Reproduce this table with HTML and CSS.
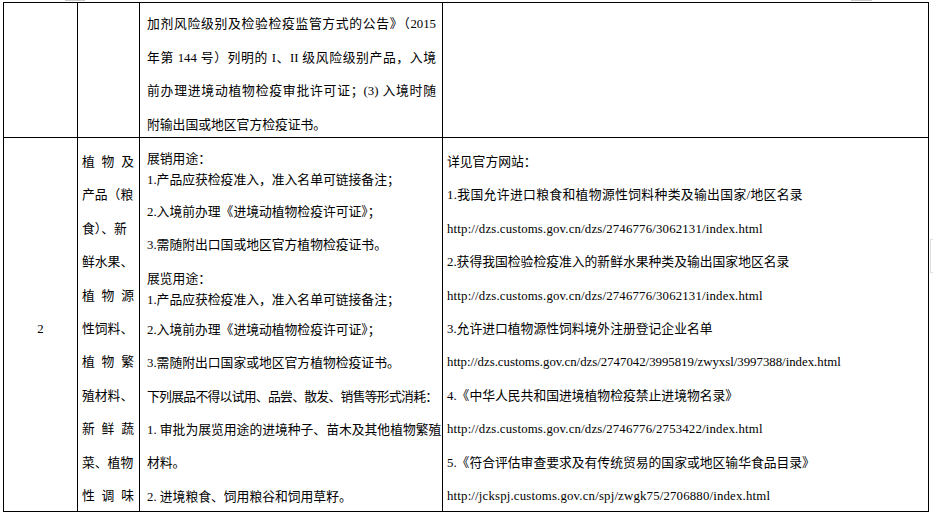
FILE: index.html
```html
<!DOCTYPE html>
<html lang="zh-CN">
<head>
<meta charset="utf-8">
<title>进境展品检疫要求</title>
<link rel="stylesheet" href="styles.css">
</head>
<body>
<div class="sheet">
  <div class="grid">
    <div class="cell"></div>
    <div class="cell"></div>
    <div class="cell c3 r1">
      <div class="jl">加剂风险级别及检验检疫监管方式的公告》（2015</div>
      <div class="jl">年第 144 号）列明的 I、II 级风险级别产品，入境</div>
      <div class="jl">前办理进境动植物检疫审批许可证；(3) 入境时随</div>
      <div>附输出国或地区官方检疫证书。</div>
    </div>
    <div class="cell"></div>

    <div class="cell c1"><div>2</div></div>
    <div class="cell c2">
      <div class="jl">植物及</div>
      <div>产品（粮</div>
      <div>食）、新</div>
      <div>鲜水果、</div>
      <div class="jl">植物源</div>
      <div>性饲料、</div>
      <div class="jl">植物繁</div>
      <div>殖材料、</div>
      <div class="jl">新鲜蔬</div>
      <div>菜、植物</div>
      <div class="jl">性调味</div>
    </div>
    <div class="cell c3 r2">
      <div class="ln">展销用途：</div>
      <div class="ln">1.产品应获检疫准入，准入名单可链接备注；</div>
      <div class="ln g11">2.入境前办理《进境动植物检疫许可证》；</div>
      <div class="ln g12">3.需随附出口国或地区官方植物检疫证书。</div>
      <div class="ln g13">展览用途：</div>
      <div class="ln">1.产品应获检疫准入，准入名单可链接备注；</div>
      <div class="ln g9">2.入境前办理《进境动植物检疫许可证》；</div>
      <div class="ln g12">3.需随附出口国家或地区官方植物检疫证书。</div>
      <div class="ln g12 squeeze">下列展品不得以试用、品尝、散发、销售等形式消耗：</div>
      <div class="ln g12 jl">1. 审批为展览用途的进境种子、苗木及其他植物繁殖</div>
      <div class="ln g12">材料。</div>
      <div class="ln g12">2. 进境粮食、饲用粮谷和饲用草籽。</div>
    </div>
    <div class="cell c4">
      <div>详见官方网站：</div>
      <div class="wide">1.我国允许进口粮食和植物源性饲料种类及输出国家/地区名录</div>
      <div class="url">http://dzs.customs.gov.cn/dzs/2746776/3062131/index.html</div>
      <div>2.获得我国检验检疫准入的新鲜水果种类及输出国家地区名录</div>
      <div class="url">http://dzs.customs.gov.cn/dzs/2746776/3062131/index.html</div>
      <div>3.允许进口植物源性饲料境外注册登记企业名单</div>
      <div>http://dzs.customs.gov.cn/dzs/2747042/3995819/zwyxsl/3997388/index.html</div>
      <div>4.《中华人民共和国进境植物检疫禁止进境物名录》</div>
      <div class="url">http://dzs.customs.gov.cn/dzs/2746776/2753422/index.html</div>
      <div>5.《符合评估审查要求及有传统贸易的国家或地区输华食品目录》</div>
      <div class="url">http://jckspj.customs.gov.cn/spj/zwgk75/2706880/index.html</div>
    </div>
  </div>
  <span class="mark mark-tl"></span>
  <span class="mark mark-tr"></span>
  <span class="mark mark-side"></span>
</div>
</body>
</html>
```

FILE: styles.css
```css
html, body {
  margin: 0;
  padding: 0;
  background: #fff;
}

.sheet {
  position: relative;
  width: 933px;
  height: 519px;
  padding: 2px 0 0 3px;
  box-sizing: border-box;
  font-family: "Liberation Serif", "Noto Sans CJK SC", serif;
  font-size: 12.8px;
  color: #000;
}

.grid {
  display: grid;
  grid-template-columns: 74px 62px 303px 486px;
  grid-template-rows: 135px 374px;
  width: max-content;
  border-top: 1px solid #000;
  border-left: 1px solid #000;
}

.cell {
  box-sizing: border-box;
  border-right: 1px solid #000;
  border-bottom: 1px solid #000;
  white-space: nowrap;
}

.jl {
  text-align: justify;
  text-align-last: justify;
}

.c1 {
  text-align: center;
  padding-top: 175px;
  line-height: 33.4px;
}

.c2 {
  padding: 8px 5px 0 4px;
  line-height: 33.4px;
}

.c3 {
  padding-left: 7px;
  padding-right: 6px;
}

.r1 {
  padding-top: 5.2px;
  line-height: 33.6px;
}

.r2 {
  padding-top: 10.5px;
}

.ln {
  line-height: 21px;
}

.g9 { margin-top: 9px; }
.g11 { margin-top: 11px; }
.g12 { margin-top: 12.4px; }
.g13 { margin-top: 13px; }

.squeeze {
  letter-spacing: -0.7px;
}

.c4 {
  padding: 8px 0 0 4px;
  line-height: 33.4px;
}

.wide {
  letter-spacing: 0.35px;
}

.url {
  letter-spacing: 0.18px;
}

.mark {
  position: absolute;
  display: block;
  border-color: #c8c8c8;
  border-style: solid;
  border-width: 0;
}

.mark-tl {
  left: 65px;
  top: 0;
  width: 20px;
  height: 1px;
  border-bottom-width: 1px;
  box-sizing: border-box;
}

.mark-tr {
  left: 851px;
  top: 0;
  width: 21px;
  height: 1px;
  border-bottom-width: 1px;
  box-sizing: border-box;
}

.mark-side {
  left: 930px;
  top: 239px;
  width: 4px;
  height: 34px;
  border-top-width: 1px;
  border-bottom-width: 1px;
  border-left-width: 1px;
  border-color: #e0e0e0;
  box-sizing: border-box;
}
```
